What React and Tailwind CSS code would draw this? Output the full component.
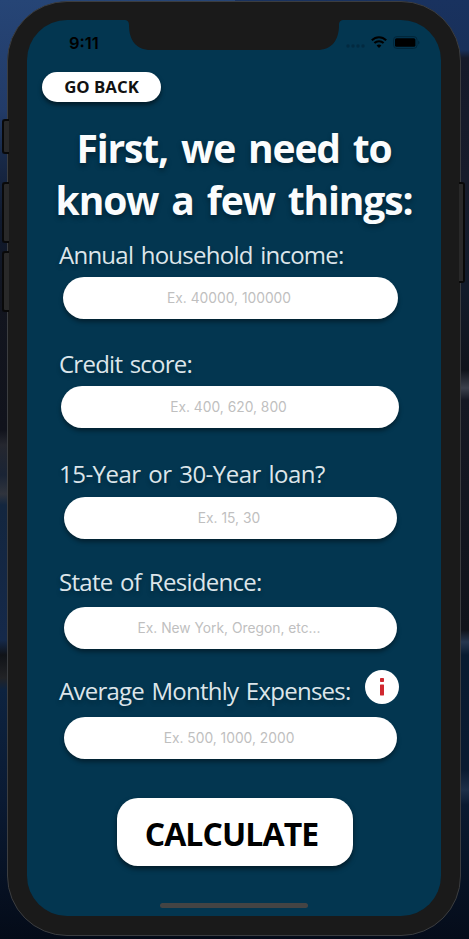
import React from "react";

const fields = [
  {
    label: "Annual household income:",
    placeholder: "Ex. 40000, 100000",
    row: "mt-[13px] h-[109px]",
    spacing: "tracking-[-0.75px]",
    input: "ml-9 w-[335px]",
  },
  {
    label: "Credit score:",
    placeholder: "Ex. 400, 620, 800",
    row: "h-[110px]",
    spacing: "tracking-[-0.75px]",
    input: "ml-[34px] w-[338px]",
  },
  {
    label: "15-Year or 30-Year loan?",
    placeholder: "Ex. 15, 30",
    row: "h-[108px]",
    spacing: "tracking-[-0.52px]",
    input: "ml-[37px] mt-px w-[333px]",
  },
  {
    label: "State of Residence:",
    placeholder: "Ex. New York, Oregon, etc...",
    row: "h-[109px]",
    spacing: "tracking-[-0.7px]",
    input: "ml-[37px] mt-[3px] w-[333px]",
  },
  {
    label: "Average Monthly Expenses:",
    placeholder: "Ex. 500, 1000, 2000",
    row: "h-[110px]",
    spacing: "tracking-[-0.75px]",
    input: "ml-[37px] mt-[4px] w-[333px]",
    info: true,
  },
];

const StatusBar = () => (
  <div className="flex h-[44px] items-start justify-between pt-[14px] pr-[21px] pl-[42px]">
    <span className="font-['Inter',sans-serif] text-[16.5px] leading-[18px] font-semibold text-black">
      9:11
    </span>
    <div className="flex h-[17px] items-center">
      <svg width="19" height="4" viewBox="0 0 19 4" className="mt-1.5 fill-[#022a40]">
        <circle cx="2" cy="2" r="1.7" />
        <circle cx="7" cy="2" r="1.7" />
        <circle cx="12" cy="2" r="1.7" />
        <circle cx="17" cy="2" r="1.7" />
      </svg>
      <svg width="16" height="12" viewBox="0 0 16 12" className="-mt-px ml-[6px]" fill="none" stroke="black" strokeWidth="2.1">
        <path d="M.8 4.3C5 .2 11 .2 15.2 4.3" />
        <path d="M3.4 7.1C6 4.6 10 4.6 12.6 7.1" />
        <path d="M8 11.9 5.6 9.5C7 8.1 9 8.1 10.4 9.5Z" fill="black" stroke="none" />
      </svg>
      <svg width="27" height="13" viewBox="0 0 27 13" className="ml-[6px]">
        <rect x=".6" y=".6" width="23.4" height="11.8" rx="3.2" fill="none" stroke="#02263a" strokeWidth="1" />
        <rect x="2" y="2.2" width="20.4" height="8.6" rx="1.6" fill="black" />
        <path d="M25.2 4.4v4.2c1.7-.8 1.7-3.4 0-4.2Z" fill="#02263a" />
      </svg>
    </div>
  </div>
);

const InfoButton = () => (
  <button className="-mt-[5px] ml-auto flex h-[34px] w-[34px] items-center justify-center self-start rounded-full bg-white">
    <svg width="6" height="18" viewBox="0 0 6 18" fill="#d0282f">
      <rect x="1" y="0" width="4" height="4" rx=".7" />
      <rect x="1" y="6.5" width="4" height="11" rx=".4" />
    </svg>
  </button>
);

const Field = ({ label, placeholder, row, spacing, input, info }) => (
  <div className={row}>
    <div className="flex h-[38px] items-center pr-[42px] pl-8">
      <label
        className={`pb-[6px] text-[24px] leading-[34px] whitespace-nowrap text-[#dce5ea] [text-shadow:0_3px_4px_rgba(0,0,0,0.25)] [word-spacing:2px] ${spacing}`}
      >
        {label}
      </label>
      {info && <InfoButton />}
    </div>
    <input
      placeholder={placeholder}
      className={`block h-[42px] rounded-full bg-white pr-[3px] text-center font-['Inter',sans-serif] text-[13.8px] text-black shadow-[0_3px_4px_rgba(0,0,0,0.4)] outline-none placeholder:text-[#bfbfbf] ${input}`}
    />
  </div>
);

const App = () => (
  <div className="relative flex h-[939px] w-[469px] overflow-hidden bg-[#070d18] pt-px pl-[7px] font-['Open_Sans','Noto_Sans',sans-serif]">
    {/* wallpaper behind the phone */}
    <div className="absolute inset-y-0 left-0 w-1/2 bg-[linear-gradient(to_bottom,#264576_0,#223b68_110px,#192b4b_150px,#101a2e_220px,#12151f_300px,#11131c_430px,#25272f_445px,#1a2435_475px,#30343d_494px,#13263f_505px,#15294a_640px,#101318_655px,#222326_678px,#0d2340_690px,#0a1a33_800px,#040b18_939px)]" />
    <div className="absolute inset-y-0 right-0 w-1/2 bg-[linear-gradient(to_bottom,#19325f_0,#18305a_50px,#151a29_58px,#171c2b_180px,#121b2a_290px,#10131b_370px,#3b404c_388px,#151823_400px,#10131b_630px,#25364f_642px,#081b30_655px,#0a1a30_770px,#1d2f48_790px,#0a1a30_805px,#050c1a_939px)]" />

    {/* side buttons */}
    <div className="absolute top-[119px] left-[2px] z-10 h-[35px] w-[7px] rounded-l-[3px] border-2 border-r-0 border-[#090909] bg-[#292929]" />
    <div className="absolute top-[182px] left-[2px] z-10 h-[61px] w-[7px] rounded-l-[3px] border-2 border-r-0 border-[#090909] bg-[#292929]" />
    <div className="absolute top-[251px] left-[2px] z-10 h-[61px] w-[7px] rounded-l-[3px] border-2 border-r-0 border-[#090909] bg-[#292929]" />
    <div className="absolute top-[182px] left-[459px] z-10 h-[101px] w-[6px] rounded-r-[3px] border-2 border-l-0 border-[#090909] bg-[#292929]" />

    <div className="relative h-[935px] w-[454px] rounded-[60px] border border-[#3b3d40] bg-[#1a1a1a] pt-[18px] pl-[19px]">
      <div className="relative flex h-[896px] w-[414px] flex-col overflow-hidden rounded-[40px] bg-[#033650]">
        {/* notch */}
        <svg width="220" height="30" viewBox="0 0 220 30" className="absolute top-0 left-[97px] fill-[#1a1a1a]">
          <path d="M0 0C3.5 0 5 1.5 5 5C5 20 12 30 27 30H193C208 30 215 20 215 5C215 1.5 216.5 0 220 0Z" />
        </svg>
        <StatusBar />
        <button className="mt-2 ml-[15px] h-[30px] w-[119px] shrink-0 rounded-full bg-white text-[16.8px] leading-[30px] font-bold text-[#111] shadow-[0_3px_4px_rgba(0,0,0,0.5)]">
          GO BACK
        </button>
        <h1 className="mt-[20px] text-center text-[39px] leading-[52px] font-bold tracking-[-1.15px] whitespace-nowrap text-[#fafcfd] [text-shadow:0_3px_5px_rgba(0,0,0,0.35)] [word-spacing:4px]">
          First, we need to
          <br />
          know a few things:
        </h1>
        {fields.map((field) => (
          <Field key={field.label} {...field} />
        ))}
        <button className="mt-[13px] ml-[90px] h-[68px] w-[236px] shrink-0 rounded-[21px] bg-white pt-[3px] pr-[7px] text-[32px] font-bold tracking-[-0.9px] text-black shadow-[0_3px_5px_rgba(0,0,0,0.5)]">
          CALCULATE
        </button>
        <div className="mt-auto mb-2 ml-[133px] h-[5px] w-[148px] shrink-0 rounded-full bg-[#444]" />
      </div>
    </div>
  </div>
);

export default App;
